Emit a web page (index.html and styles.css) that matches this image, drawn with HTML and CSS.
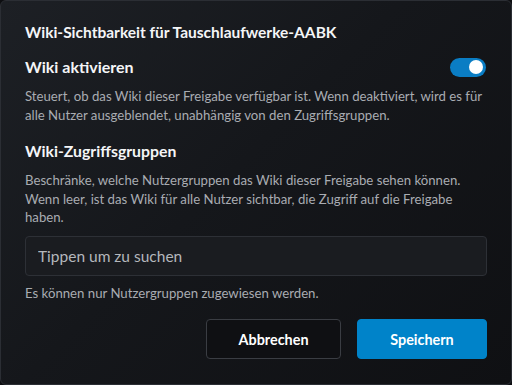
FILE: index.html
```html
<!DOCTYPE html>
<html>
<head>
    <meta charset="UTF-8">
    <title>Wiki-Sichtbarkeit</title>
    <link rel="stylesheet" href="styles.css">
</head>
<body>
<div class="dialog">
    <h2 class="title">Wiki-Sichtbarkeit für Tauschlaufwerke-AABK</h2>

    <div class="row">
        <span class="label">Wiki aktivieren</span>
        <span class="toggle"><span class="knob"></span></span>
    </div>
    <p class="hint">Steuert, ob das Wiki dieser Freigabe verfügbar ist. Wenn deaktiviert, wird es für alle Nutzer ausgeblendet, unabhängig von den Zugriffsgruppen.</p>

    <div class="label section">Wiki-Zugriffsgruppen</div>
    <p class="hint">Beschränke, welche Nutzergruppen das Wiki dieser Freigabe sehen können. Wenn leer, ist das Wiki für alle Nutzer sichtbar, die Zugriff auf die Freigabe haben.</p>

    <input class="search" type="text" placeholder="Tippen um zu suchen">
    <p class="hint small">Es können nur Nutzergruppen zugewiesen werden.</p>

    <div class="actions">
        <button class="btn cancel">Abbrechen</button>
        <button class="btn save">Speichern</button>
    </div>
</div>
</body>
</html>
```

FILE: styles.css
```css
*{ margin: 0; padding: 0; box-sizing: border-box; }
body{
    background: #0d0e11;
    font-family: Lato, "Noto Sans", sans-serif;
    color: #f2f3f5;
}
.dialog{
    width: 512px;
    height: 385px;
    border: 1px solid #2b2e34;
    border-radius: 6px;
    background: linear-gradient(135deg, #1d2025 0%, #15171b 45%, #0f1013 100%);
    padding: 22px 24px 0 24px;
    display: flex;
    flex-direction: column;
}
.title{
    font-size: 15.5px;
    font-weight: 700;
    line-height: 18px;
    color: #f4f5f7;
}
.row{
    margin-top: 16px;
    display: flex;
    align-items: center;
    justify-content: space-between;
}
.label{
    font-size: 16px;
    font-weight: 700;
    line-height: 20px;
    color: #f4f5f7;
}
.section{
    margin-top: 17px;
    font-size: 15.8px;
}
.toggle{
    width: 36px;
    height: 19px;
    border-radius: 10px;
    background: #0a7dc4;
    display: flex;
    align-items: center;
    justify-content: flex-end;
    padding-right: 3px;
    margin-right: 1px;
}
.knob{
    width: 14px;
    height: 14px;
    border-radius: 50%;
    background: #fff;
}
.hint{
    margin-top: 10px;
    font-size: 13.2px;
    line-height: 18.5px;
    color: #a9acb2;
}
.search{
    margin-top: 9px;
    height: 40px;
    width: 100%;
    border: 1px solid #2d3036;
    border-radius: 4px;
    background: #1a1c20;
    padding: 0 12px;
    font-family: inherit;
    font-size: 15.5px;
    color: #e0e2e5;
    outline: none;
}
.search::placeholder{
    color: #b4b7bc;
}
.small{
    margin-top: 8px;
}
.actions{
    margin-top: 17px;
    display: flex;
    justify-content: flex-end;
    gap: 16px;
}
.btn{
    height: 40px;
    border-radius: 4px;
    font-family: inherit;
    font-size: 14.4px;
    font-weight: 700;
    color: #fff;
}
.cancel{
    width: 135px;
    background: #0f1013;
    border: 1px solid #3a3d43;
}
.save{
    width: 130px;
    background: #0083c9;
    border: 1px solid #0083c9;
}
```
